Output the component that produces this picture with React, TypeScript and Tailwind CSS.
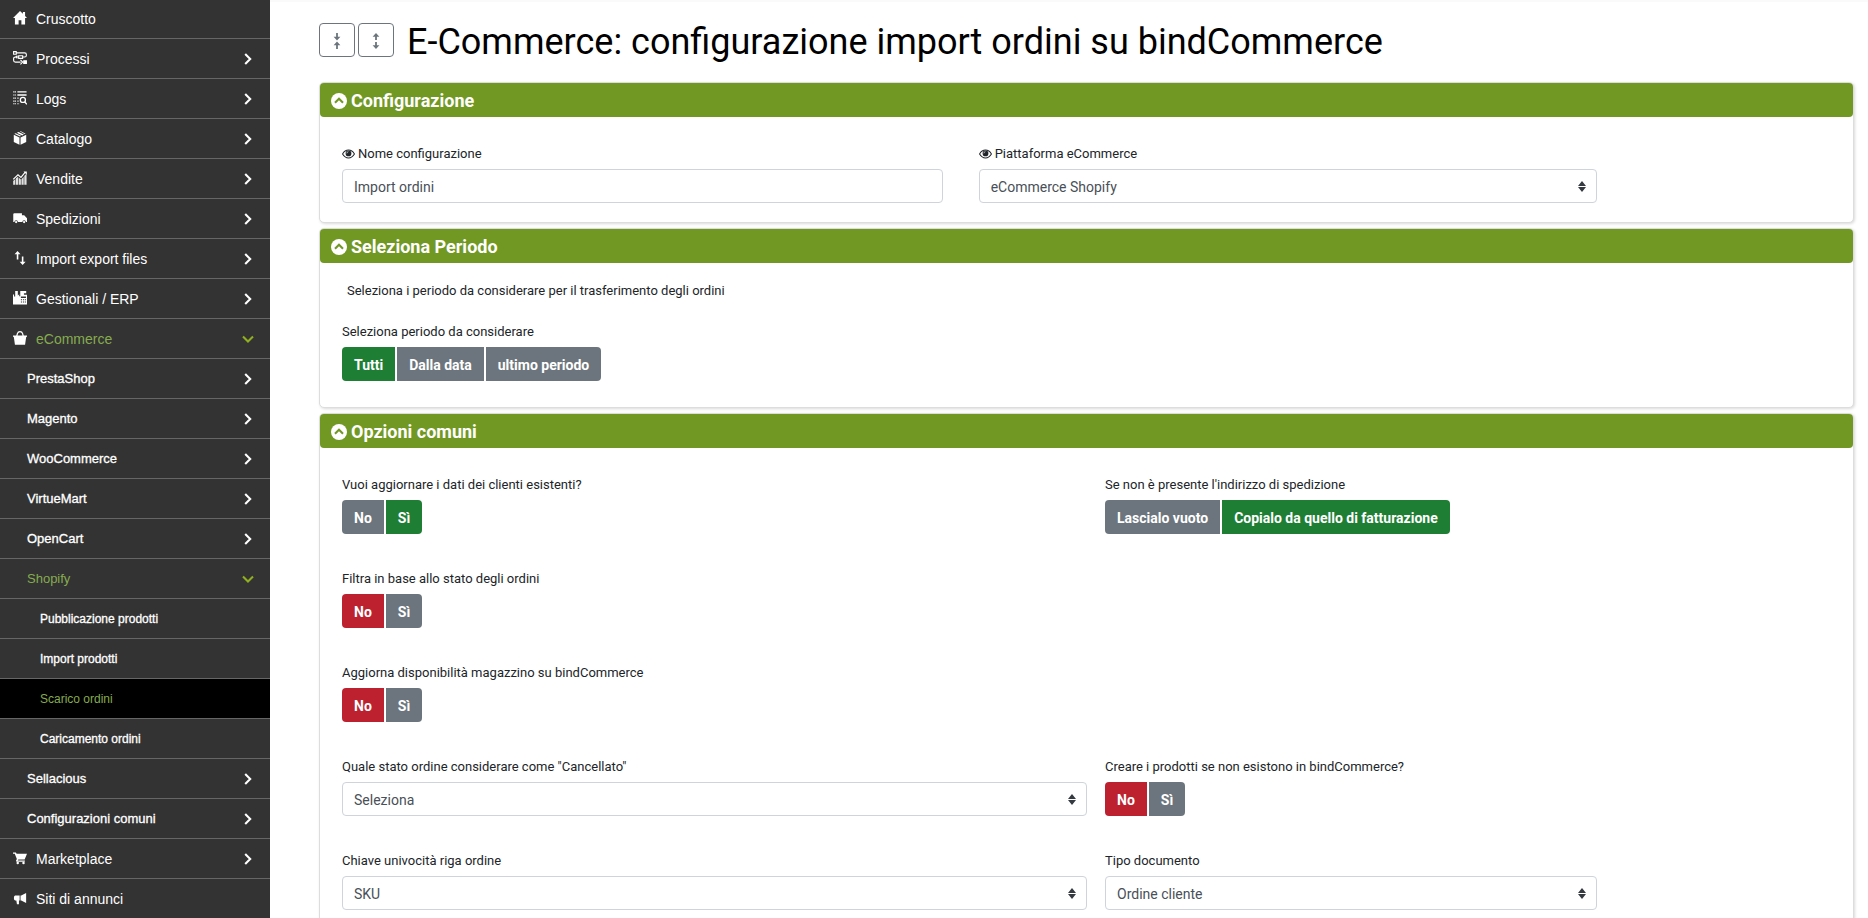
import { useId, useState } from "react";
import type { ReactNode } from "react";

type Level = 0 | 1 | 2;

interface MenuItem {
  label: string;
  level: Level;
  icon?: ReactNode;
  arrow?: "right" | "down";
  current?: boolean;
}

const icons = {
  home: (
    <path d="M8 0 0 8h2.2v7.5h4.2v-4.8h3.2v4.8h4.2V8H16l-2.2-2.3V1.2h-2.5v2z" fill="currentColor" />
  ),
  process: (
    <g fill="none" stroke="currentColor" strokeWidth="1.3">
      <path d="M.7.7h3v3h-3zM3.7 2.2h9.6q2 0 2 2v.6q0 2-2 2H11M6.5 5.4H11v3H6.5zM6.5 6.9H2.7q-2 0-2 2v1.8q0 2 2 2h6" />
      <path d="M8.5 10.2 11 12.7l-2.5 2.5M5 5.2 3.4 6.9 5 8.5" />
      <path d="M12.3 11.2h3v3h-3z" fill="currentColor" />
    </g>
  ),
  logs: (
    <g fill="none" stroke="currentColor" strokeWidth="1.5">
      <path d="M5 1h10.5M5 4.6h10.5" />
      <path d="M.3 1h3M.3 4.6h3M.3 8.2h3M.3 11.6h3M.3 14.6h3M5 8.2h2M5 11.6h2M5 14.6h2" strokeWidth="1.3" strokeDasharray="1.4 .5" />
      <circle cx="11.3" cy="10.2" r="2.9" />
      <path d="m13.3 12.3 2.5 3" />
    </g>
  ),
  box: (
    <g fill="currentColor">
      <path d="m4.4 1.9 2-.9 6 2.9-2 1.1zM7.8.3 8.4 0l6 3-1.4.5zM3.2 2.5l6 3L8 6.2 1.5 3.2z" />
      <path d="M.9 4.3 7.4 7.5v8.3L.9 12.5zM15.1 4.3 8.6 7.5v8.3l6.5-3.3z" />
    </g>
  ),
  sales: (
    <g fill="currentColor">
      <path d="M.2 11.5 2.7 9v6.7H.2zM3.4 8.4l2.4-1.8v9.1H3.4zM6.5 7.4 9 9.7v6H6.5zM9.7 9.5l2.5-3v9.2H9.7zM12.9 5.6l2.6-2.7v12.8h-2.6z" opacity=".85" />
      <path d="m.3 9.4 5.4-5 3.4 3 4.9-6" fill="none" stroke="currentColor" strokeWidth="1.3" />
      <path d="M12 .5h3.8v3.7z" />
    </g>
  ),
  truck: (
    <g fill="currentColor">
      <path d="M1.6 2.5h8.6v2.3h2.6L16 8.2v4.3h-1.3a2 2 0 0 0-4 0H5.6a2 2 0 0 0-4 0H.3V3.7q0-1.2 1.3-1.2z" />
      <circle cx="3.6" cy="12.6" r="1.3" />
      <circle cx="12.7" cy="12.6" r="1.3" />
    </g>
  ),
  arrows: (
    <g fill="currentColor">
      <path d="M5.2 0 8.6 3.8H6.1v6H4.3v-6H1.8zM11 16l-3.4-3.8h2.5v-6h1.8v6h2.5z" />
    </g>
  ),
  register: (
    <g fill="currentColor">
      <path d="M2.5 0h3v5l1.6-1.3V6h1.2V0h6.8v2.7h-2.6v1.6H16v11.2H0V4h1.2v2.3h1.3z" />
      <path d="M9 6.4h5.8v1.5H9zM9 9.4h1.3v1.2H9zM11.3 9.4h1.3v1.2h-1.3zM13.5 9.4h1.3v1.2h-1.3zM9 12h1.3v1.2H9zM11.3 12h1.3v1.2h-1.3zM13.5 12h1.3v1.2h-1.3z" fill="#333" />
    </g>
  ),
  basket: (
    <g>
      <path d="M0 5h16v1.3l-1 .7-1.2 8.7H2.2L1 7l-1-.7z" fill="currentColor" />
      <path d="M4.3 6 5 3q.7-2.3 3-2.3T11 3l.7 3" fill="none" stroke="currentColor" strokeWidth="1.4" />
    </g>
  ),
  cart: (
    <g fill="currentColor">
      <path d="M0 1.7h3.3l.8 1.5H16l-2.7 6.5H6l-.5 1.2h8v1.3H4l-.6-1 1-2.2L2 3.1H0z" />
      <circle cx="5.4" cy="13.6" r="1.4" />
      <circle cx="12" cy="13.6" r="1.4" />
    </g>
  ),
  megaphone: (
    <g fill="currentColor">
      <path d="M15 2.2v11.6l-5.6-2.9H8.6V5.1h.8zM7.6 5.1v5.8H6.8v4.3H4.5l-.7-4.3H2.4Q1 10.6 1 8t1.4-2.9z" />
    </g>
  ),
};

const menu: MenuItem[] = [
  { label: "Cruscotto", level: 0, icon: icons.home },
  { label: "Processi", level: 0, icon: icons.process, arrow: "right" },
  { label: "Logs", level: 0, icon: icons.logs, arrow: "right" },
  { label: "Catalogo", level: 0, icon: icons.box, arrow: "right" },
  { label: "Vendite", level: 0, icon: icons.sales, arrow: "right" },
  { label: "Spedizioni", level: 0, icon: icons.truck, arrow: "right" },
  { label: "Import export files", level: 0, icon: icons.arrows, arrow: "right" },
  { label: "Gestionali / ERP", level: 0, icon: icons.register, arrow: "right" },
  { label: "eCommerce", level: 0, icon: icons.basket, arrow: "down" },
  { label: "PrestaShop", level: 1, arrow: "right" },
  { label: "Magento", level: 1, arrow: "right" },
  { label: "WooCommerce", level: 1, arrow: "right" },
  { label: "VirtueMart", level: 1, arrow: "right" },
  { label: "OpenCart", level: 1, arrow: "right" },
  { label: "Shopify", level: 1, arrow: "down" },
  { label: "Pubblicazione prodotti", level: 2 },
  { label: "Import prodotti", level: 2 },
  { label: "Scarico ordini", level: 2, current: true },
  { label: "Caricamento ordini", level: 2 },
  { label: "Sellacious", level: 1, arrow: "right" },
  { label: "Configurazioni comuni", level: 1, arrow: "right" },
  { label: "Marketplace", level: 0, icon: icons.cart, arrow: "right" },
  { label: "Siti di annunci", level: 0, icon: icons.megaphone },
];

const levelClass: Record<Level, string> = {
  0: "pl-[13px] text-sm",
  1: "pl-[27px] text-[13px]",
  2: "pl-10 text-xs",
};

function Sidebar() {
  return (
    <nav
      aria-label="Menu principale"
      className="w-[270px] shrink-0 overflow-y-auto bg-[#333] [scrollbar-width:none] font-['Liberation_Sans',Arial,sans-serif]"
    >
      <ul className="-mt-px">
        {menu.map((item) => {
          const open = item.arrow === "down" || item.current;
          return (
            <li key={item.label} className="border-b border-[#666]">
              <a
                href="#"
                aria-current={item.current ? "page" : undefined}
                className={`flex h-[39px] items-center pt-px pr-4 ${levelClass[item.level]} ${
                  item.current ? "bg-black" : ""
                } ${open ? "text-[#86ab4f]" : "text-white"} ${
                  item.level > 0 && !open ? "[-webkit-text-stroke:0.3px_#fff]" : ""
                }`}
              >
                {item.icon && (
                  <svg viewBox="0 0 16 16" className="mr-[9px] mb-0.5 size-[14px] text-white" aria-hidden="true">
                    {item.icon}
                  </svg>
                )}
                <span className="flex-1">{item.label}</span>
                {item.arrow === "right" && (
                  <svg viewBox="0 0 12 12" className="size-3" aria-hidden="true">
                    <path d="m3.2 1 5 5-5 5" fill="none" stroke="#fff" strokeWidth="2.1" />
                  </svg>
                )}
                {item.arrow === "down" && (
                  <svg viewBox="0 0 12 12" className="size-3" aria-hidden="true">
                    <path d="m1 3.4 5 5 5-5" fill="none" stroke="#90b020" strokeWidth="2.1" />
                  </svg>
                )}
              </a>
            </li>
          );
        })}
      </ul>
    </nav>
  );
}

function Panel({ title, children }: { title: string; children: ReactNode }) {
  const [open, setOpen] = useState(true);
  return (
    <section className="mb-[5px] rounded-[5px] border border-[#ddd] bg-white shadow-[1px_1px_3px_rgba(0,0,0,0.15)]">
      <h2>
        <button
          type="button"
          aria-expanded={open}
          onClick={() => setOpen(!open)}
          className="flex h-[34px] w-full items-center gap-1 rounded bg-[#719823] px-[11px] pt-px text-lg font-bold text-white"
        >
          <svg viewBox="0 0 16 16" className={open ? "size-4" : "size-4 rotate-180"} aria-hidden="true">
            <circle cx="8" cy="8" r="8" fill="#fff" />
            <path d="m4 9.8 4-4 4 4" fill="none" stroke="#719823" strokeWidth="2.1" />
          </svg>
          {title}
        </button>
      </h2>
      {open && children}
    </section>
  );
}

function EyeIcon() {
  return (
    <svg viewBox="0 0 14 10" className="mr-[3px] h-[10px] w-[13px]" aria-hidden="true">
      <path d="M.6 5Q3 .8 7 .8T13.4 5Q11 9.2 7 9.2T.6 5z" fill="none" stroke="#212529" strokeWidth="1.1" />
      <circle cx="7" cy="4.4" r="3.1" fill="#212529" />
      <path d="M5.2 4.3q0-1.7 1.7-1.8" fill="none" stroke="#fff" strokeWidth=".7" />
    </svg>
  );
}

const labelClass = "mb-[5px] flex items-center text-[13px] leading-5 text-[#212529]";
const controlClass =
  "h-[34px] w-full rounded border border-[#ced4da] bg-white px-[11px] pt-0.5 text-sm text-[#495057] outline-none focus:border-[#719823]";

function TextField({ label, value }: { label: string; value: string }) {
  const id = useId();
  return (
    <div>
      <label htmlFor={id} className={labelClass}>
        <EyeIcon />
        {label}
      </label>
      <input id={id} type="text" defaultValue={value} className={controlClass} />
    </div>
  );
}

function SelectField({ label, value, eye }: { label: string; value: string; eye?: boolean }) {
  const id = useId();
  return (
    <div>
      <label htmlFor={id} className={labelClass}>
        {eye && <EyeIcon />}
        {label}
      </label>
      <div className="relative">
        <select id={id} className={`${controlClass} appearance-none`}>
          <option>{value}</option>
        </select>
        <svg
          viewBox="0 0 8 11"
          className="pointer-events-none absolute top-3 right-[11px] h-[11px] w-2"
          aria-hidden="true"
        >
          <path fill="#343a40" d="M4 0 0 5h8zM4 11 0 6h8z" />
        </svg>
      </div>
    </div>
  );
}

const tones = {
  green: "bg-[#1e7e34]",
  red: "bg-[#bd2130]",
  gray: "bg-[#6c757d]",
};

interface ToggleProps {
  label: string;
  options: string[];
  value: string;
}

function ToggleGroup({ label, options, value }: ToggleProps) {
  const id = useId();
  const [selected, setSelected] = useState(value);
  return (
    <div>
      <div id={id} className={labelClass}>
        {label}
      </div>
      <div role="group" aria-labelledby={id} className="flex gap-0.5">
        {options.map((option) => {
          const active = option === selected;
          const tone = !active ? tones.gray : option === "No" ? tones.red : tones.green;
          return (
            <button
              key={option}
              type="button"
              aria-pressed={active}
              onClick={() => setSelected(option)}
              className={`h-[34px] px-3 pt-0.5 text-sm font-bold text-white first:rounded-l last:rounded-r ${tone}`}
            >
              {option}
            </button>
          );
        })}
      </div>
    </div>
  );
}

const squareButton =
  "flex h-[34px] w-9 items-center justify-center rounded border border-[#6c757d] bg-white text-[#6c757d]";

export default function App() {
  return (
    <div className="flex h-screen bg-white font-[Roboto,sans-serif]">
      <Sidebar />
      <main className="min-w-0 flex-1 overflow-y-auto border-t-2 border-[#fafafa] pr-[14px] pl-[49px] [scrollbar-width:none]">
        <header className="flex h-20 items-center">
          <div className="mb-1 flex gap-[3px]">
            <button type="button" aria-label="Comprimi tutto" className={squareButton}>
              <svg viewBox="0 0 8 16" className="mt-0.5 h-4 w-2" aria-hidden="true">
                <path d="M4 0v6M4 16v-6" stroke="currentColor" strokeWidth="1.8" />
                <path d="M.6 3.8 4 7.6l3.4-3.8zM.6 12.2 4 8.4l3.4 3.8z" fill="currentColor" />
              </svg>
            </button>
            <button type="button" aria-label="Espandi tutto" className={squareButton}>
              <svg viewBox="0 0 8 16" className="mt-0.5 h-4 w-2" aria-hidden="true">
                <path d="M4 1v6M4 15V9" stroke="currentColor" strokeWidth="1.8" />
                <path d="M.6 3.8 4 0l3.4 3.8zM.6 12.2 4 16l3.4-3.8z" fill="currentColor" />
              </svg>
            </button>
          </div>
          <h1 className="ml-[13px] text-4xl text-black">
            E-Commerce: configurazione import ordini su bindCommerce
          </h1>
        </header>

        <Panel title="Configurazione">
          <div className="-mr-2 flex pt-[27px] pb-[19px] pl-[13px]">
            <div className="w-5/12 pr-[27px] pl-[9px]">
              <TextField label="Nome configurazione" value="Import ordini" />
            </div>
            <div className="w-5/12 px-[9px]">
              <SelectField label="Piattaforma eCommerce" value="eCommerce Shopify" eye />
            </div>
          </div>
        </Panel>

        <Panel title="Seleziona Periodo">
          <div className="px-[22px] pt-[18px] pb-[26px]">
            <p className="mb-[21px] pl-[5px] text-[13px] leading-5 text-[#212529]">
              Seleziona i periodo da considerare per il trasferimento degli ordini
            </p>
            <ToggleGroup
              label="Seleziona periodo da considerare"
              options={["Tutti", "Dalla data", "ultimo periodo"]}
              value="Tutti"
            />
          </div>
        </Panel>

        <Panel title="Opzioni comuni">
          <div className="grid grid-cols-2 gap-x-[18px] gap-y-[35px] pt-[27px] pr-[3px] pb-[35px] pl-[22px]">
            <ToggleGroup label="Vuoi aggiornare i dati dei clienti esistenti?" options={["No", "Sì"]} value="Sì" />
            <ToggleGroup
              label="Se non è presente l'indirizzo di spedizione"
              options={["Lascialo vuoto", "Copialo da quello di fatturazione"]}
              value="Copialo da quello di fatturazione"
            />
            <div className="col-span-2">
              <ToggleGroup label="Filtra in base allo stato degli ordini" options={["No", "Sì"]} value="No" />
            </div>
            <div className="col-span-2">
              <ToggleGroup
                label="Aggiorna disponibilità magazzino su bindCommerce"
                options={["No", "Sì"]}
                value="No"
              />
            </div>
            <SelectField label={'Quale stato ordine considerare come "Cancellato"'} value="Seleziona" />
            <ToggleGroup
              label="Creare i prodotti se non esistono in bindCommerce?"
              options={["No", "Sì"]}
              value="No"
            />
            <SelectField label="Chiave univocità riga ordine" value="SKU" />
            <div className="w-[66%]">
              <SelectField label="Tipo documento" value="Ordine cliente" />
            </div>
          </div>
        </Panel>
      </main>
    </div>
  );
}
